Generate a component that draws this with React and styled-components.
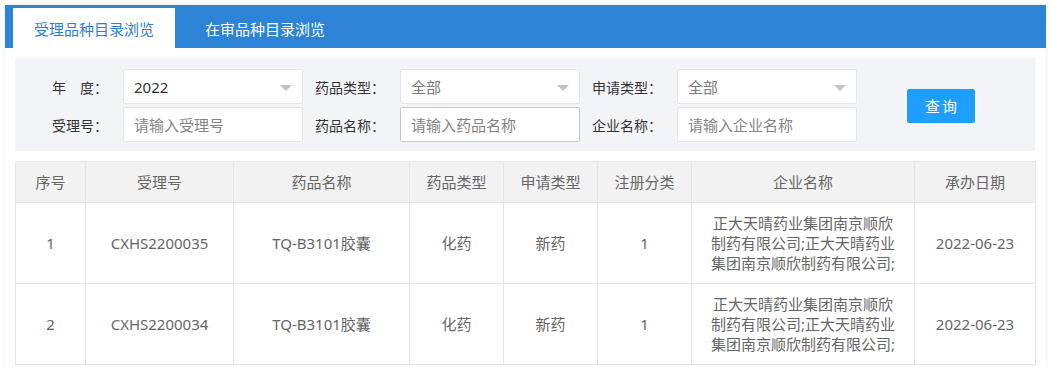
import React from "react"
import styled, { createGlobalStyle } from "styled-components"

const GlobalStyle = createGlobalStyle`
    body {
        margin: 0;
        background: #fff;
        font-family: "Noto Sans", "Noto Sans CJK SC", sans-serif;
        color: #333;
    }
    * { box-sizing: border-box; }
`
const Page = styled.div`
    padding: 5px 5px 0;
`
const Container = styled.div`
    background: #fff;
    box-shadow: 0 0 3px rgba(0,0,0,0.12);
    min-height: calc(100vh - 5px);
`
const TabBar = styled.div`
    display: flex;
    gap: 9px;
    height: 43px;
    padding: 3px 0 0 8px;
    background: #2d83d6;
`
const Tab = styled.div`
    width: 162px;
    height: 40px;
    display: flex;
    align-items: center;
    justify-content: center;
    font-size: 15px;
    cursor: pointer;
    background: ${p => p.$active ? '#fff' : 'transparent'};
    color: ${p => p.$active ? '#2c7fd3' : '#fff'};
`
const Body = styled.div`
    padding: 10px 11px 0 10px;
`
const FilterPanel = styled.div`
    display: flex;
    align-items: center;
    padding: 11px 0 9px 11px;
    background: #f3f4f8;
`
const FieldGrid = styled.div`
    display: grid;
    grid-template-columns: repeat(3, 277px);
    row-gap: 3px;
`
const Field = styled.div`
    display: flex;
    align-items: center;
`
const Label = styled.label`
    width: 97px;
    padding-right: 15px;
    text-align: right;
    font-size: 14px;
    color: #333;
    white-space: nowrap;
`
const SelectBox = styled.div`
    position: relative;
    width: 180px;
    height: 35px;
    padding-left: 10px;
    display: flex;
    align-items: center;
    background: #fff;
    border: 1px solid #e6e6e6;
    border-radius: 2px;
    font-size: 15px;
    color: ${p => p.$muted ? '#7a7a7a' : '#333'};
    &::after {
        content: "";
        position: absolute;
        right: 10px;
        top: 15px;
        border-style: solid;
        border-width: 6px 6px 0;
        border-color: #c2c2c2 transparent transparent;
    }
`
const TextInput = styled.input`
    width: 180px;
    height: 35px;
    padding: 0 10px;
    background: #fff;
    border: 1px solid ${p => p.$hover ? '#c9c9c9' : '#e6e6e6'};
    border-radius: 2px;
    font: inherit;
    font-size: 15px;
    color: #333;
    outline: none;
    &::placeholder {
        color: #858585;
    }
`
const SearchButton = styled.button`
    margin-left: 50px;
    width: 68px;
    height: 34px;
    border: none;
    border-radius: 2px;
    background: #1e9fff;
    color: #fff;
    font: inherit;
    font-size: 15px;
    letter-spacing: 2px;
    padding: 0 0 0 2px;
    cursor: pointer;
`
const Table = styled.table`
    margin-top: 10px;
    width: 1020px;
    table-layout: fixed;
    border-collapse: collapse;
    font-size: 15px;
    color: #666;
`
const HeadCell = styled.th`
    padding: 10px 8px;
    line-height: 20px;
    font-weight: normal;
    background: #f2f2f2;
    border: 1px solid #e6e6e6;
    text-align: center;
    white-space: nowrap;
`
const Cell = styled.td`
    padding: 10px 8px;
    line-height: 20px;
    border: 1px solid #e6e6e6;
    text-align: center;
    vertical-align: middle;
    white-space: ${p => p.$lines ? 'pre-line' : 'nowrap'};
`

const columns = [
    { title: '序号', key: 'no', width: 70 },
    { title: '受理号', key: 'acceptNo', width: 148 },
    { title: '药品名称', key: 'name', width: 176 },
    { title: '药品类型', key: 'type', width: 94 },
    { title: '申请类型', key: 'apply', width: 94 },
    { title: '注册分类', key: 'category', width: 94 },
    { title: '企业名称', key: 'company', width: 223, lines: true },
    { title: '承办日期', key: 'date', width: 121 },
]

// 企业名称按原页面的换行位置分行
const company = [
    '正大天晴药业集团南京顺欣',
    '制药有限公司;正大天晴药业',
    '集团南京顺欣制药有限公司;',
].join('\n')

const rows = [
    { no: 1, acceptNo: 'CXHS2200035', name: 'TQ-B3101胶囊', type: '化药', apply: '新药', category: '1', company, date: '2022-06-23' },
    { no: 2, acceptNo: 'CXHS2200034', name: 'TQ-B3101胶囊', type: '化药', apply: '新药', category: '1', company, date: '2022-06-23' },
]

export default function App() {
    return (
        <>
            <GlobalStyle />
            <Page>
                <Container>
                    <TabBar>
                        <Tab $active>受理品种目录浏览</Tab>
                        <Tab>在审品种目录浏览</Tab>
                    </TabBar>
                    <Body>
                        <FilterPanel>
                            <FieldGrid>
                                <Field>
                                    <Label>年　度：</Label>
                                    <SelectBox>2022</SelectBox>
                                </Field>
                                <Field>
                                    <Label>药品类型：</Label>
                                    <SelectBox $muted>全部</SelectBox>
                                </Field>
                                <Field>
                                    <Label>申请类型：</Label>
                                    <SelectBox $muted>全部</SelectBox>
                                </Field>
                                <Field>
                                    <Label>受理号：</Label>
                                    <TextInput placeholder="请输入受理号" readOnly />
                                </Field>
                                <Field>
                                    <Label>药品名称：</Label>
                                    <TextInput $hover placeholder="请输入药品名称" readOnly />
                                </Field>
                                <Field>
                                    <Label>企业名称：</Label>
                                    <TextInput placeholder="请输入企业名称" readOnly />
                                </Field>
                            </FieldGrid>
                            <SearchButton>查询</SearchButton>
                        </FilterPanel>
                        <Table>
                            <colgroup>
                                {columns.map(col => <col key={col.key} style={{ width: col.width }} />)}
                            </colgroup>
                            <thead>
                                <tr>
                                    {columns.map(col => <HeadCell key={col.key}>{col.title}</HeadCell>)}
                                </tr>
                            </thead>
                            <tbody>
                                {rows.map(row => (
                                    <tr key={row.no}>
                                        {columns.map(col => (
                                            <Cell key={col.key} $lines={col.lines}>{row[col.key]}</Cell>
                                        ))}
                                    </tr>
                                ))}
                            </tbody>
                        </Table>
                    </Body>
                </Container>
            </Page>
        </>
    )
}
